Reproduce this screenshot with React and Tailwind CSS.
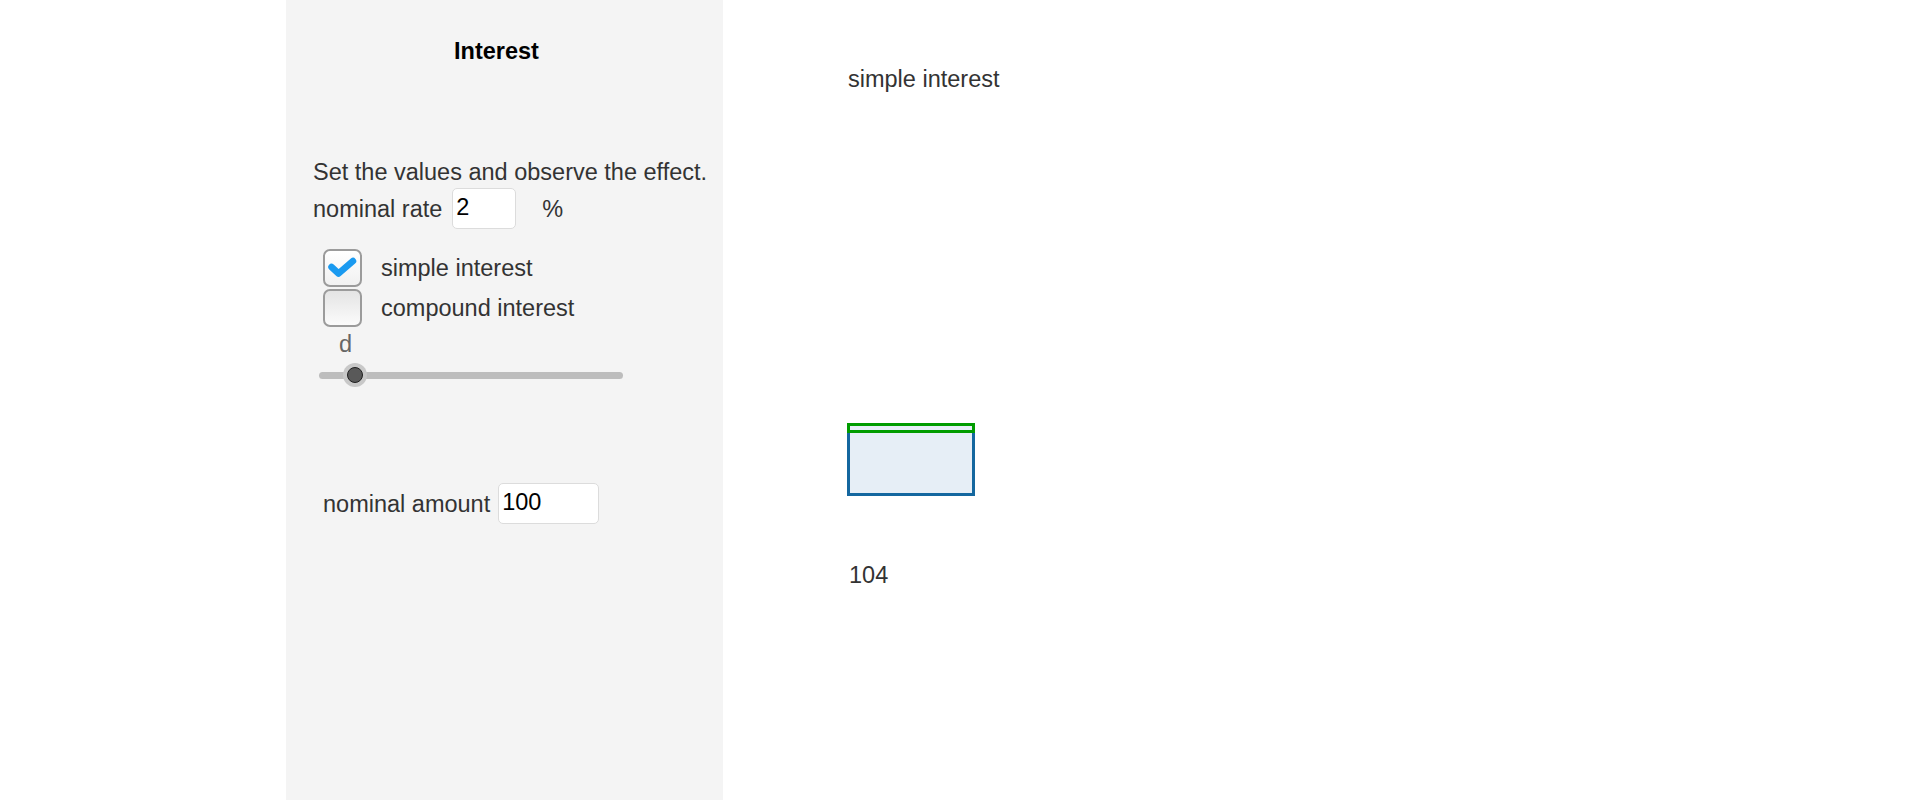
import React from "react";

const font = { fontFamily: '"Liberation Sans", Arial, sans-serif' };

function Checkbox({ checked }) {
  return (
    <div
      className={
        "w-[39px] h-[38px] rounded-[7px] border-2 border-[#9b9b9b] shrink-0 flex items-center justify-center " +
        (checked
          ? "bg-gradient-to-b from-white to-[#f1f1f1]"
          : "bg-gradient-to-b from-[#e4e4e4] to-[#fbfbfb]")
      }
    >
      {checked && (
        <svg width="35" height="34" viewBox="0 0 35 34">
          <path
            d="M6.5 16 L13.5 22.5 L28 10"
            fill="none"
            stroke="#1a9af0"
            strokeWidth="6.5"
            strokeLinecap="round"
            strokeLinejoin="round"
          />
        </svg>
      )}
    </div>
  );
}

export default function App() {
  return (
    <div
      className="flex w-[1920px] h-[800px] bg-white text-[#333333] text-[23.5px] leading-[27px]"
      style={font}
    >
      <div className="w-[286px] shrink-0" />
      <div className="w-[437px] shrink-0 h-full bg-[#f4f4f4] flex flex-col">
        <div className="pt-[38px] pl-[168px] font-bold text-black">Interest</div>
        <div className="mt-[94px] pl-[27px]">Set the values and observe the effect.</div>
        <div className="mt-[2px] pl-[27px] flex items-center h-[41px]">
          <span className="pt-[2px]">nominal rate</span>
          <div className="ml-[10px] w-[64px] h-[41px] rounded-[5px] border border-[#dcdcdc] bg-white pl-[3px] pb-[2px] flex items-center text-black">
            2
          </div>
          <span className="ml-[26px] pt-[2px]">%</span>
        </div>
        <div className="mt-[20px] pl-[37px] flex items-center h-[38px]">
          <Checkbox checked />
          <span className="ml-[19px] pt-[1px]">simple interest</span>
        </div>
        <div className="mt-[2px] pl-[37px] flex items-center h-[38px]">
          <Checkbox />
          <span className="ml-[19px]">compound interest</span>
        </div>
        <div className="mt-[4px] pl-[53px] text-[#666666]">d</div>
        <div className="mt-[5px] ml-[33px] w-[304px] h-[24px] relative flex items-center">
          <div className="w-full h-[7px] rounded-full bg-[#bdbdbd]" />
          <div className="absolute left-[24px] top-0 w-[24px] h-[24px] rounded-full bg-[#c8c8c8] flex items-center justify-center">
            <div className="w-[16px] h-[16px] rounded-full bg-[#595959] border-[1.5px] border-[#1f1f1f]" />
          </div>
        </div>
        <div className="mt-[96px] pl-[37px] flex items-center h-[41px]">
          <span className="pt-[2px]">nominal amount</span>
          <div className="ml-[8px] w-[101px] h-[41px] rounded-[5px] border border-[#dcdcdc] bg-white pl-[3px] pb-[2px] flex items-center text-black">
            100
          </div>
        </div>
      </div>
      <div className="flex-1 flex flex-col pl-[124px]">
        <div className="pt-[66px] pl-[1px]">simple interest</div>
        <div className="mt-[330px] w-[128px] flex flex-col">
          <div className="h-[10px] border-[3px] border-[#009c00] bg-[#e6eef6]" />
          <div className="h-[63px] border-x-[3px] border-b-[3px] border-[#14679f] bg-[#e6eef6]" />
        </div>
        <div className="mt-[66px] pl-[2px]">104</div>
      </div>
    </div>
  );
}
